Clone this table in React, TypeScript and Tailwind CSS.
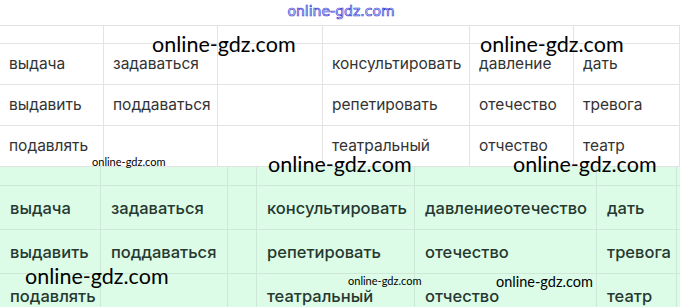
import React from 'react';

const topCols = 'grid-cols-[104px_114px_105px_147px_104px_1fr]';
const greenCols = 'grid-cols-[101px_127px_29px_158px_182px_80px_1fr]';

const topRows: string[][] = [
  ['выдача', 'задаваться', '', 'консультировать', 'давление', 'дать'],
  ['выдавить', 'поддаваться', '', 'репетировать', 'отечество', 'тревога'],
  ['подавлять', '', '', 'театральный', 'отчество', 'театр'],
];

const greenRows: string[][] = [
  ['выдача', 'задаваться', '', 'консультировать', 'давлениеотечество', 'дать', ''],
  ['выдавить', 'поддаваться', '', 'репетировать', 'отечество', 'тревога', ''],
  ['подавлять', '', '', 'театральный', 'отчество', 'театр', ''],
];

function Mark({ className }: { className: string }) {
  return (
    <div className={`absolute whitespace-nowrap leading-none text-black font-['Lato',sans-serif] ${className}`}>
      online-gdz.com
    </div>
  );
}

export default function App() {
  return (
    <div className="relative h-[307px] w-[680px] overflow-hidden bg-white font-['Inter',sans-serif]">
      {/* top caption */}
      <div className="flex h-[25px] justify-center pt-[4px]">
        <span className="ml-[2px] font-['DejaVu_Sans',sans-serif] text-[14px] leading-none text-white [-webkit-text-stroke:0.7px_#3b3bd6]">
          online-gdz.com
        </span>
      </div>

      {/* white table */}
      <div className={`grid ${topCols} border-t border-[#e3e3e3]`}>
        {Array.from({ length: 6 }).map((_, i) => (
          <div key={i} className="h-[18px] border-b border-r border-[#e3e3e3]" />
        ))}
        {topRows.map((row, r) =>
          row.map((cell, c) => (
            <div
              key={`${r}-${c}`}
              className="flex h-[41px] items-center border-b border-r border-[#e3e3e3] pl-[9px] text-[15.5px] text-[#333]"
            >
              {cell}
            </div>
          ))
        )}
      </div>

      {/* green table */}
      <div className={`grid ${greenCols} bg-[#dcfce8]`}>
        {Array.from({ length: 7 }).map((_, i) => (
          <div key={i} className="h-[19px] border-b border-r border-[#cde8d6]" />
        ))}
        {greenRows.map((row, r) =>
          row.map((cell, c) => (
            <div
              key={`${r}-${c}`}
              className="flex h-[44px] items-center border-b border-r border-[#cde8d6] pl-[10px] pt-[1px] text-[16.5px] font-medium text-[#26382f]"
            >
              {cell}
            </div>
          ))
        )}
      </div>

      {/* watermarks */}
      <Mark className="left-[152px] top-[34px] text-[21.5px]" />
      <Mark className="left-[480px] top-[34px] text-[21.5px]" />
      <Mark className="left-[92px] top-[156px] text-[11px]" />
      <Mark className="left-[268px] top-[154px] text-[21.5px]" />
      <Mark className="left-[513px] top-[154px] text-[21.5px]" />
      <Mark className="left-[25px] top-[266px] text-[21.5px]" />
      <Mark className="left-[348px] top-[275px] text-[11px]" />
      <Mark className="left-[496px] top-[275px] text-[14.5px]" />
    </div>
  );
}
